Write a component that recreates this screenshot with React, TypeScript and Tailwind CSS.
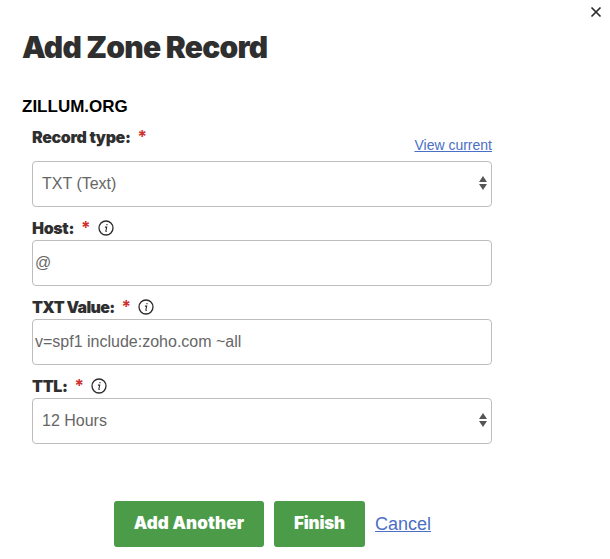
import React from "react";

const heading = { fontFamily: "Inter, sans-serif" };

function Info() {
  return (
    <svg width="16" height="16" viewBox="0 0 16 16" className="ml-[7px] shrink-0" aria-hidden="true">
      <circle cx="8" cy="8" r="7" fill="none" stroke="#2b2b2b" strokeWidth="1.3" />
      <path d="M8.4 4.1h1.1v1.2h-1.1z" fill="#2b2b2b" />
      <path d="M6.9 7.1h1.8L7.9 11c-.1.5.2.6.9.1" fill="none" stroke="#2b2b2b" strokeWidth="1.1" />
    </svg>
  );
}

function Label({ text, info, tight }: { text: string; info?: boolean; tight?: boolean }) {
  return (
    <div className={`flex items-center h-[20px] font-[Inter,sans-serif] text-[16px] font-black text-[#2f2f2f] ${tight ? "tracking-[-0.65px]" : "tracking-[-0.35px]"}`}>
      <span>{text}</span>
      <span className="ml-[7px] mt-[2px] text-[#d0312d] font-bold text-[17px] tracking-normal">*</span>
      {info && <Info />}
    </div>
  );
}

function Arrows() {
  return (
    <svg width="10" height="16" viewBox="0 0 10 16" className="absolute right-[3px] top-[13px]" aria-hidden="true">
      <path d="M5 1 9 7H1z" fill="#555" />
      <path d="M5 15 1 9h8z" fill="#555" />
    </svg>
  );
}

function Box({ value, select }: { value: string; select?: boolean }) {
  return (
    <div className={`relative flex items-center h-[46px] w-[460px] rounded-[4px] border border-[#bdbdbd] bg-white text-[16px] text-[#666] ${select ? "pl-[9px]" : "pl-[2px]"}`}>
      <span>{value}</span>
      {select && <Arrows />}
    </div>
  );
}

export default function App() {
  return (
    <div className="relative w-[610px] h-[559px] bg-white overflow-hidden font-['Liberation_Sans',Arial,sans-serif]">
      <svg width="12" height="12" viewBox="0 0 12 12" className="absolute left-[590px] top-[6px]" aria-hidden="true">
        <path d="M1.5 1.5l9 9M10.5 1.5l-9 9" stroke="#2b2b2b" strokeWidth="1.7" />
      </svg>

      <div className="pt-[27px] pl-[22px]">
        <h1 style={heading} className="text-[30px] leading-[40px] font-black tracking-[-0.75px] text-[#2f2f2f]">Add Zone Record</h1>
        <div className="mt-[30px] text-[17px] leading-[20px] font-bold text-black">ZILLUM.ORG</div>
      </div>

      <div className="pl-[32px] w-[492px] box-content">
        <div className="mt-[7px] flex items-start justify-between w-[460px] h-[37px]">
          <div className="mt-[3px]"><Label text="Record type:" /></div>
          <a className="mt-[13px] text-[14px] leading-[16px] text-[#4a6fc4] underline">View current</a>
        </div>
        <Box value="TXT (Text)" select />
        <div className="mt-[11px] mb-[2px]"><Label text="Host:" info /></div>
        <Box value="@" />
        <div className="mt-[11px] mb-[2px]"><Label text="TXT Value:" info tight /></div>
        <Box value="v=spf1 include:zoho.com ~all" />
        <div className="mt-[11px] mb-[2px]"><Label text="TTL:" info /></div>
        <Box value="12 Hours" select />
      </div>

      <div className="mt-[57px] ml-[114px] flex items-center">
        <button style={heading} className="h-[46px] w-[150px] rounded-[3px] bg-[#4b9b48] text-white text-[17px] font-black tracking-[0.15px]">Add Another</button>
        <button style={heading} className="ml-[10px] h-[46px] w-[91px] rounded-[3px] bg-[#4b9b48] text-white text-[17px] font-black tracking-[-0.2px]">Finish</button>
        <a className="ml-[10px] text-[18px] text-[#4a6fc4] underline">Cancel</a>
      </div>
    </div>
  );
}
